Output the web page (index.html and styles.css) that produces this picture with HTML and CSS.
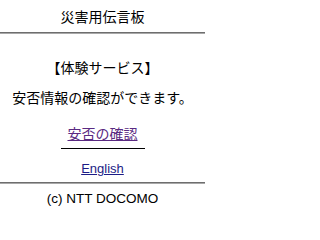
FILE: index.html
```html
<!DOCTYPE html>
<html lang="ja">
<head>
<meta charset="utf-8">
<title>災害用伝言板</title>
<link rel="stylesheet" href="styles.css">
</head>
<body>
<div class="page">
  <div class="title">災害用伝言板</div>
  <div class="rule"></div>
  <div class="row sub">【体験サービス】</div>
  <div class="row msg">安否情報の確認ができます。</div>
  <div class="row link-row"><a class="visited" href="#">安否の確認</a></div>
  <div class="divider"></div>
  <div class="row en-row"><a class="en" href="#">English</a></div>
  <div class="rule bottom"></div>
  <div class="row foot">(c) NTT DOCOMO</div>
</div>
</body>
</html>
```

FILE: styles.css
```css
html, body {
  margin: 0;
  padding: 0;
  background: #ffffff;
}
body {
  font-family: "Noto Sans CJK JP", "Liberation Sans", sans-serif;
  font-size: 14px;
  color: #000000;
}
.page {
  width: 205px;
  display: flex;
  flex-direction: column;
  align-items: center;
}
.title {
  width: 100%;
  height: 32px;
  line-height: 32px;
  text-align: center;
}
.rule {
  width: 100%;
  height: 0;
  border-top: 1px solid #6e6e6e;
  border-bottom: 1px solid #a8a8a8;
}
.row {
  width: 100%;
  height: 20px;
  line-height: 20px;
  text-align: center;
  white-space: nowrap;
}
.sub { margin-top: 23px; }
.msg { margin-top: 10px; }
.link-row { margin-top: 16px; }
.visited {
  color: #5a2a82;
  text-decoration: underline;
}
.divider {
  width: 84px;
  height: 1px;
  background: #000000;
  margin-top: 5px;
}
.en-row { margin-top: 8px; }
.en {
  font-family: "Liberation Sans", sans-serif;
  font-size: 13px;
  color: #1c1c86;
  text-decoration: underline;
}
.bottom { margin-top: 5px; }
.foot {
  margin-top: 5px;
  font-family: "Liberation Sans", sans-serif;
  font-size: 13.5px;
}
```
